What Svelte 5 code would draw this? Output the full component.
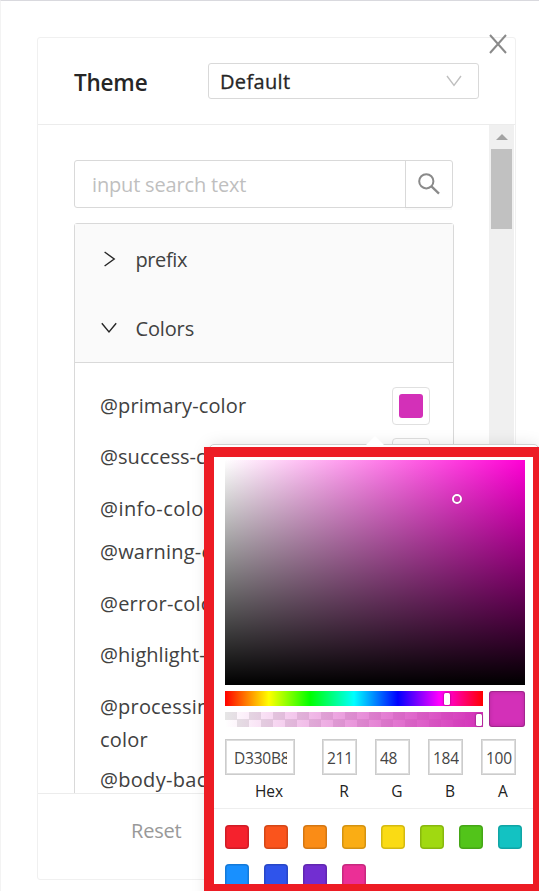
<script>
  const rows = [
    { name: '@primary-color', gap: 0, track: 0.12, tint: '#d330b8' },
    { name: '@success-color', gap: 18, track: 0.05, tint: '#52c41a' },
    { name: '@info-color', gap: 19, track: 0.45 },
    { name: '@warning-color', gap: 10, track: 0.2 },
    { name: '@error-color', gap: 19, track: 0.2 },
    { name: '@highlight-color', gap: 18, track: 0.05 },
    { name: '@processing-', second: 'color', gap: 19, track: 0.18 },
    { name: '@body-bac', gap: 7, track: 0.3 },
  ];
  const fields = [
    { label: 'Hex', value: 'D330B8', kind: 'hex' },
    { label: 'R', value: '211', kind: 'num' },
    { label: 'G', value: '48', kind: 'num' },
    { label: 'B', value: '184', kind: 'num' },
    { label: 'A', value: '100', kind: 'num' },
  ];
  const presets = [
    '#f5222d', '#fa541c', '#fa8c16', '#faad14', '#fadb14', '#a0d911',
    '#52c41a', '#13c2c2', '#1890ff', '#2f54eb', '#722ed1', '#eb2f96',
  ];
</script>

<div class="page">
  <section class="panel">
    <header class="head">
      <h1>Theme</h1>
      <div class="select">
        <span>Default</span>
        <svg width="16" height="12" viewBox="0 0 16 12"><path d="M1 1 L8 10.3 L15 1" fill="none" stroke="#bfbfbf" stroke-width="1.4" /></svg>
      </div>
    </header>

    <div class="body">
      <div class="content">
        <div class="search">
          <span class="placeholder">input search text</span>
          <span class="go">
            <svg width="24" height="24" viewBox="0 0 24 24" fill="none" stroke="#8a8a8a"><circle cx="9.3" cy="9.3" r="7.1" stroke-width="2" /><path d="M14.2 14.2 L22 21.6" stroke-width="2.3" /></svg>
          </span>
        </div>

        <div class="collapse">
          <div class="heads">
            <div class="fold">
              <svg width="16" height="16" viewBox="0 0 16 16"><path d="M3.6 1 L13.2 8 L3.6 15" fill="none" stroke="#262626" stroke-width="1.4" /></svg>
              <span class="prefix">prefix</span>
            </div>
            <div class="fold">
              <svg width="16" height="16" viewBox="0 0 16 16"><path d="M0.8 3.2 L8 12 L15.2 3.2" fill="none" stroke="#262626" stroke-width="1.4" /></svg>
              <span class="colors">Colors</span>
            </div>
          </div>
          <div class="rows">
            {#each rows as row}
              <div class="row" style="margin-top: {row.gap}px; letter-spacing: {row.track}px">
                <span>{row.name}{#if row.second}<br />{row.second}{/if}</span>
                {#if row.tint}
                  <i class="chip"><b style="background: {row.tint}"></b></i>
                {/if}
              </div>
            {/each}
          </div>
        </div>
      </div>
      <div class="scrollbar">
        <div class="up"><svg width="12" height="6" viewBox="0 0 12 6"><path d="M0 6 L6 0 L12 6Z" fill="#a3a3a3" /></svg></div>
        <div class="thumb"></div>
      </div>
    </div>

    <footer class="foot"><span>Reset</span></footer>
  </section>

  <svg class="close" width="18" height="20" viewBox="0 0 18 20"><path d="M1 1 L17 19 M17 1 L1 19" stroke="#8a8a8a" stroke-width="2" fill="none" /></svg>

  <div class="popover"></div>
  <div class="arrow"></div>

  <div class="frame">
    <div class="picker">
      <div class="saturation"><i></i></div>
      <div class="controls">
        <div class="sliders">
          <div class="hue"><i></i></div>
          <div class="alpha"><i></i></div>
        </div>
        <div class="current"></div>
      </div>
      <div class="fields">
        {#each fields as f}
          <div class="field {f.kind}">
            <div class="value"><span>{f.value}</span></div>
            <span class="label">{f.label}</span>
          </div>
        {/each}
      </div>
      <div class="presets">
        {#each presets as c}
          <i style="background: {c}"></i>
        {/each}
      </div>
    </div>
  </div>
</div>

<style>
  :global(body) { margin: 0; }
  .page, .page * { box-sizing: border-box; }
  .page {
    position: relative;
    width: 539px;
    height: 891px;
    padding: 36px 0 0 36px;
    overflow: hidden;
    background: #fff;
    border-top: 1px solid #d9d9de;
    border-left: 1px solid #f3f3f3;
    font-family: "Open Sans", "Noto Sans", sans-serif;
    font-size: 20px;
    color: #414141;
    white-space: nowrap;
  }
  svg { display: block; }
  .panel {
    display: flex;
    flex-direction: column;
    width: 479px;
    height: 843px;
    border: 1px solid #f0f0f0;
    border-radius: 3px;
  }
  .head {
    display: flex;
    align-items: center;
    height: 87px;
    padding: 0 36px;
    justify-content: space-between;
    border-bottom: 1px solid #ececec;
    color: #262626;
  }
  h1 { margin: 0; font-size: 22.5px; font-weight: 600; letter-spacing: -0.2px; line-height: 30px; padding-top: 4px; }
  .select {
    display: flex;
    align-items: center;
    justify-content: space-between;
    width: 271px;
    height: 36px;
    margin-top: -1px;
    padding: 0 16px 0 11px;
    border: 1px solid #d9d9d9;
    border-radius: 3px;
    font-weight: 500;
    letter-spacing: 0.35px;
    -webkit-text-stroke: 0.3px #262626;
  }
  .select span { padding-top: 2px; }
  .body { display: flex; height: 668px; overflow: hidden; }
  .content { width: 451px; padding: 35px 35px 0 36px; }
  .search {
    display: flex;
    width: 379px;
    height: 48px;
    border: 1px solid #d9d9d9;
    border-radius: 3px;
  }
  .placeholder { flex: 1; padding-left: 17px; line-height: 47px; color: #bfbfbf; letter-spacing: -0.17px; }
  .go {
    display: flex;
    align-items: center;
    justify-content: center;
    width: 47px;
    border-left: 1px solid #d9d9d9;
    box-shadow: 0 3px 0 rgba(0, 0, 0, 0.02);
  }
  .collapse {
    width: 380px;
    height: 720px;
    margin-top: 15px;
    border: 1px solid #d9d9d9;
    border-radius: 3px;
  }
  .heads { height: 139px; background: #fafafa; border-bottom: 1px solid #d9d9d9; }
  .fold { display: flex; align-items: center; height: 69px; gap: 19px; padding-left: 26px; }
  .fold span { padding-top: 1px; margin-left: -0.5px; }
  .prefix { letter-spacing: -0.4px; }
  .colors { letter-spacing: -0.15px; }
  .rows { padding: 26px 23px 0 25px; }
  .row { display: flex; align-items: center; justify-content: space-between; line-height: 33px; }
  .chip {
    display: flex;
    position: relative;
    top: 0.5px;
    width: 38px;
    height: 38px;
    margin: -3px 0;
    padding: 6px;
    border: 1px solid #e0e0e0;
    border-radius: 4px;
    background: #fff;
  }
  .chip b { width: 24px; height: 24px; border-radius: 3px; }
  .scrollbar { width: 25px; background: #f0f0f0; }
  .up { display: flex; height: 24px; align-items: center; justify-content: center; }
  .thumb { width: 21px; height: 80px; margin: 0 auto; background: #c1c1c1; }
  .foot {
    display: flex;
    align-items: center;
    height: 86px;
    padding: 0 0 12px 93px;
    border-top: 1px solid #ececec;
    color: #999;
    letter-spacing: -0.2px;
  }
  .close { position: absolute; left: 488px; top: 33px; }
  .popover {
    position: absolute;
    left: 208px;
    top: 443px;
    width: 330px;
    height: 460px;
    background: #fff;
    border: 1px solid #d0d0d0;
    border-radius: 5px;
    box-shadow: 0 3px 18px rgba(0, 0, 0, 0.15);
  }
  .arrow {
    position: absolute;
    left: 364px;
    top: 435px;
    width: 20px;
    height: 10px;
    background: #fff;
    clip-path: polygon(50% 0, 100% 100%, 0 100%);
  }
  .frame {
    position: absolute;
    left: 203px;
    top: 446px;
    width: 335px;
    height: 444px;
    border: solid #ed1c24;
    border-width: 10px 6px 7px 10px;
    background: #fff;
    overflow: hidden;
    color: #222;
  }
  .picker { padding: 3px 0 0 11px; }
  .saturation {
    position: relative;
    width: 300px;
    height: 225px;
    background: linear-gradient(to top, #000, transparent), linear-gradient(to right, #fff, #ff00d5);
  }
  .saturation i {
    position: absolute;
    left: 227px;
    top: 34px;
    width: 10px;
    height: 10px;
    border: 2px solid #fff;
    border-radius: 50%;
    box-shadow: 0 0 1px rgba(0, 0, 0, 0.4), inset 0 0 1px rgba(0, 0, 0, 0.5);
  }
  .controls { display: flex; gap: 6px; padding-top: 6px; }
  .sliders { display: flex; flex-direction: column; gap: 6px; width: 258px; }
  .hue, .alpha { position: relative; height: 15px; }
  .hue { background: linear-gradient(to right, #f00, #ff0 17%, #0f0 33%, #0ff 50%, #00f 67%, #f0f 83%, #f00); }
  .alpha {
    background: linear-gradient(to right, rgba(211, 48, 184, 0), #d330b8),
      conic-gradient(transparent 25%, #e6e6e6 0 50%, transparent 0 75%, #e6e6e6 0) 0 0 / 24px 15px;
  }
  .hue i, .alpha i {
    position: absolute;
    top: 2px;
    width: 6px;
    height: 12px;
    background: #fff;
    border-radius: 1.5px;
    box-shadow: 0 0 2px rgba(0, 0, 0, 0.6);
  }
  .hue i { left: 219px; }
  .alpha i { left: 251px; }
  .current {
    width: 36px;
    height: 36px;
    background: #d330b8;
    border-radius: 3px;
    box-shadow: inset 0 0 0 1px rgba(0, 0, 0, 0.15), inset 0 0 5px rgba(0, 0, 0, 0.2);
  }
  .fields { display: flex; gap: 18px; padding-top: 12px; height: 81px; }
  .field { display: flex; flex-direction: column; width: 35px; align-items: center; font-size: 15.5px; }
  .hex { width: 70px; margin-right: 9px; }
  .value {
    width: 100%;
    height: 36px;
    padding: 0 3px 0 4px;
    border: 1px solid #ccc;
    box-shadow: inset 0 0 0 1px #ddd;
    line-height: 36px;
    color: #444;
  }
  .value span { display: block; overflow: hidden; letter-spacing: -0.3px; }
  .hex .value { padding: 0 7px 0 8px; }
  .hex .value span { letter-spacing: -0.2px; }
  .label { line-height: 32px; padding-left: 9px; }
  .hex .label { padding-left: 18px; }
  .presets {
    display: flex;
    flex-wrap: wrap;
    gap: 15px;
    margin-left: -11px;
    padding: 16px 0 0 11px;
    border-top: 1px solid #eee;
  }
  .presets i { width: 24px; height: 24px; border-radius: 4px; box-shadow: inset 0 0 0 1.5px rgba(0, 0, 0, 0.15); }
</style>
